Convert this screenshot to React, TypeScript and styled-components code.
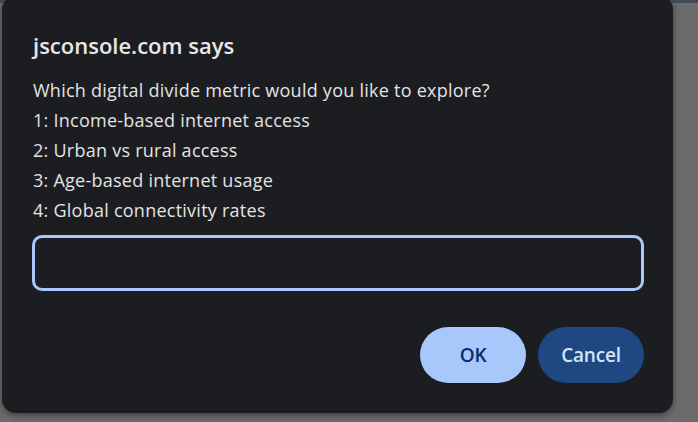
import React from "react";
import styled, { createGlobalStyle } from "styled-components";

const Global = createGlobalStyle`
  html, body { margin: 0; padding: 0; }
  body {
    width: 698px;
    height: 422px;
    overflow: hidden;
    background: linear-gradient(#434b58 0 3px, #6b6b6b 3px);
    font-family: "Open Sans", "Noto Sans", sans-serif;
  }
`;

const Dialog = styled.div`
  box-sizing: border-box;
  margin: -4px 0 0 2px;
  width: 671px;
  height: 417px;
  background: #1c1d21;
  border-radius: 14px;
  box-shadow: 0 2px 6px rgba(0, 0, 0, 0.45);
  padding: 34px 28px 0 30px;
  display: flex;
  flex-direction: column;
  color: #e3e3e3;
`;

const Title = styled.div`
  font-size: 22px;
  font-weight: 600;
  letter-spacing: 0px;
  line-height: 30px;
  margin-left: 1px;
  color: #e8e8e8;
`;

const Message = styled.div`
  margin-top: 15px;
  font-size: 18px;
  line-height: 30px;
  letter-spacing: 0.25px;
  margin-left: 1px;
`;

const Line = styled.div``;

const Input = styled.div`
  box-sizing: border-box;
  margin-top: 10px;
  height: 56px;
  width: 612px;
  border: 3px solid #a8c7fa;
  border-radius: 10px;
`;

const Actions = styled.div`
  display: flex;
  justify-content: flex-end;
  gap: 12px;
  margin-top: 36px;
  padding-right: 1px;
`;

const Button = styled.div<{ $primary?: boolean }>`
  width: 106px;
  height: 56px;
  border-radius: 28px;
  display: flex;
  align-items: center;
  justify-content: center;
  font-size: 19px;
  font-weight: 600;
  letter-spacing: -0.2px;
  background: ${(p) => (p.$primary ? "#a8c7fa" : "#1f4882")};
  color: ${(p) => (p.$primary ? "#062e6f" : "#d3e3fd")};
`;

export default function App() {
  return (
    <>
      <Global />
      <Dialog>
        <Title>jsconsole.com says</Title>
        <Message>
          <Line>Which digital divide metric would you like to explore?</Line>
          <Line>1: Income-based internet access</Line>
          <Line>2: Urban vs rural access</Line>
          <Line>3: Age-based internet usage</Line>
          <Line>4: Global connectivity rates</Line>
        </Message>
        <Input />
        <Actions>
          <Button $primary>OK</Button>
          <Button>Cancel</Button>
        </Actions>
      </Dialog>
    </>
  );
}
